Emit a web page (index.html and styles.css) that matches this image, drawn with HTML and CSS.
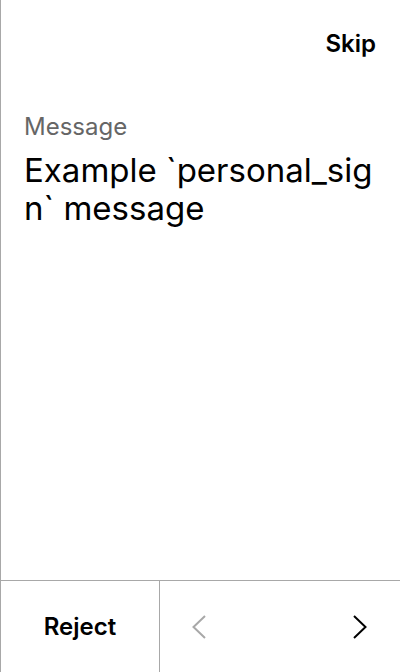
FILE: index.html
```html
<!DOCTYPE html>
<html>
<head>
<meta charset="utf-8">
<link rel="stylesheet" href="styles.css">
</head>
<body>
<div class="screen">
  <header class="top">
    <span class="skip">Skip</span>
  </header>
  <main class="content">
    <div class="label">Message</div>
    <div class="message">Example `personal_sign` message</div>
  </main>
  <footer class="bar">
    <div class="reject">Reject</div>
    <div class="nav">
      <svg class="chev prev" width="14" height="24" viewBox="0 0 14 24"><polyline points="13,1 1.5,12 13,23" fill="none" stroke="currentColor" stroke-width="2"/></svg>
      <svg class="chev next" width="14" height="24" viewBox="0 0 14 24"><polyline points="1,1 12.5,12 1,23" fill="none" stroke="currentColor" stroke-width="2"/></svg>
    </div>
  </footer>
</div>
</body>
</html>
```
FILE: styles.css
```css
html, body {
  margin: 0;
  padding: 0;
  background: #fff;
}
body {
  font-family: Inter, "Liberation Sans", sans-serif;
  color: #000;
}
.screen {
  width: 400px;
  height: 672px;
  box-sizing: border-box;
  border-left: 1px solid #a8a8a8;
  display: flex;
  flex-direction: column;
}
.top {
  display: flex;
  justify-content: flex-end;
  padding: 29px 24px 0 24px;
  height: 58px;
  box-sizing: border-box;
}
.skip {
  font-size: 24px;
  font-weight: 600;
  line-height: 29px;
}
.content {
  flex: 1;
  padding: 54px 24px 0 23px;
}
.label {
  font-size: 24px;
  line-height: 29px;
  color: #666;
}
.message {
  margin-top: 10px;
  font-size: 33px;
  line-height: 38px;
  overflow-wrap: anywhere;
  word-break: break-all;
}
.bar {
  height: 92px;
  border-top: 1px solid #a8a8a8;
  display: grid;
  grid-template-columns: 159px 1fr;
  box-sizing: border-box;
}
.reject {
  display: flex;
  align-items: center;
  justify-content: center;
  font-size: 24px;
  font-weight: 600;
  border-right: 1px solid #a8a8a8;
}
.nav {
  display: flex;
  align-items: center;
  justify-content: space-between;
  padding: 0 33px 0 32px;
}
.chev.prev { color: #a8a8a8; }
.chev.next { color: #000; }
```
